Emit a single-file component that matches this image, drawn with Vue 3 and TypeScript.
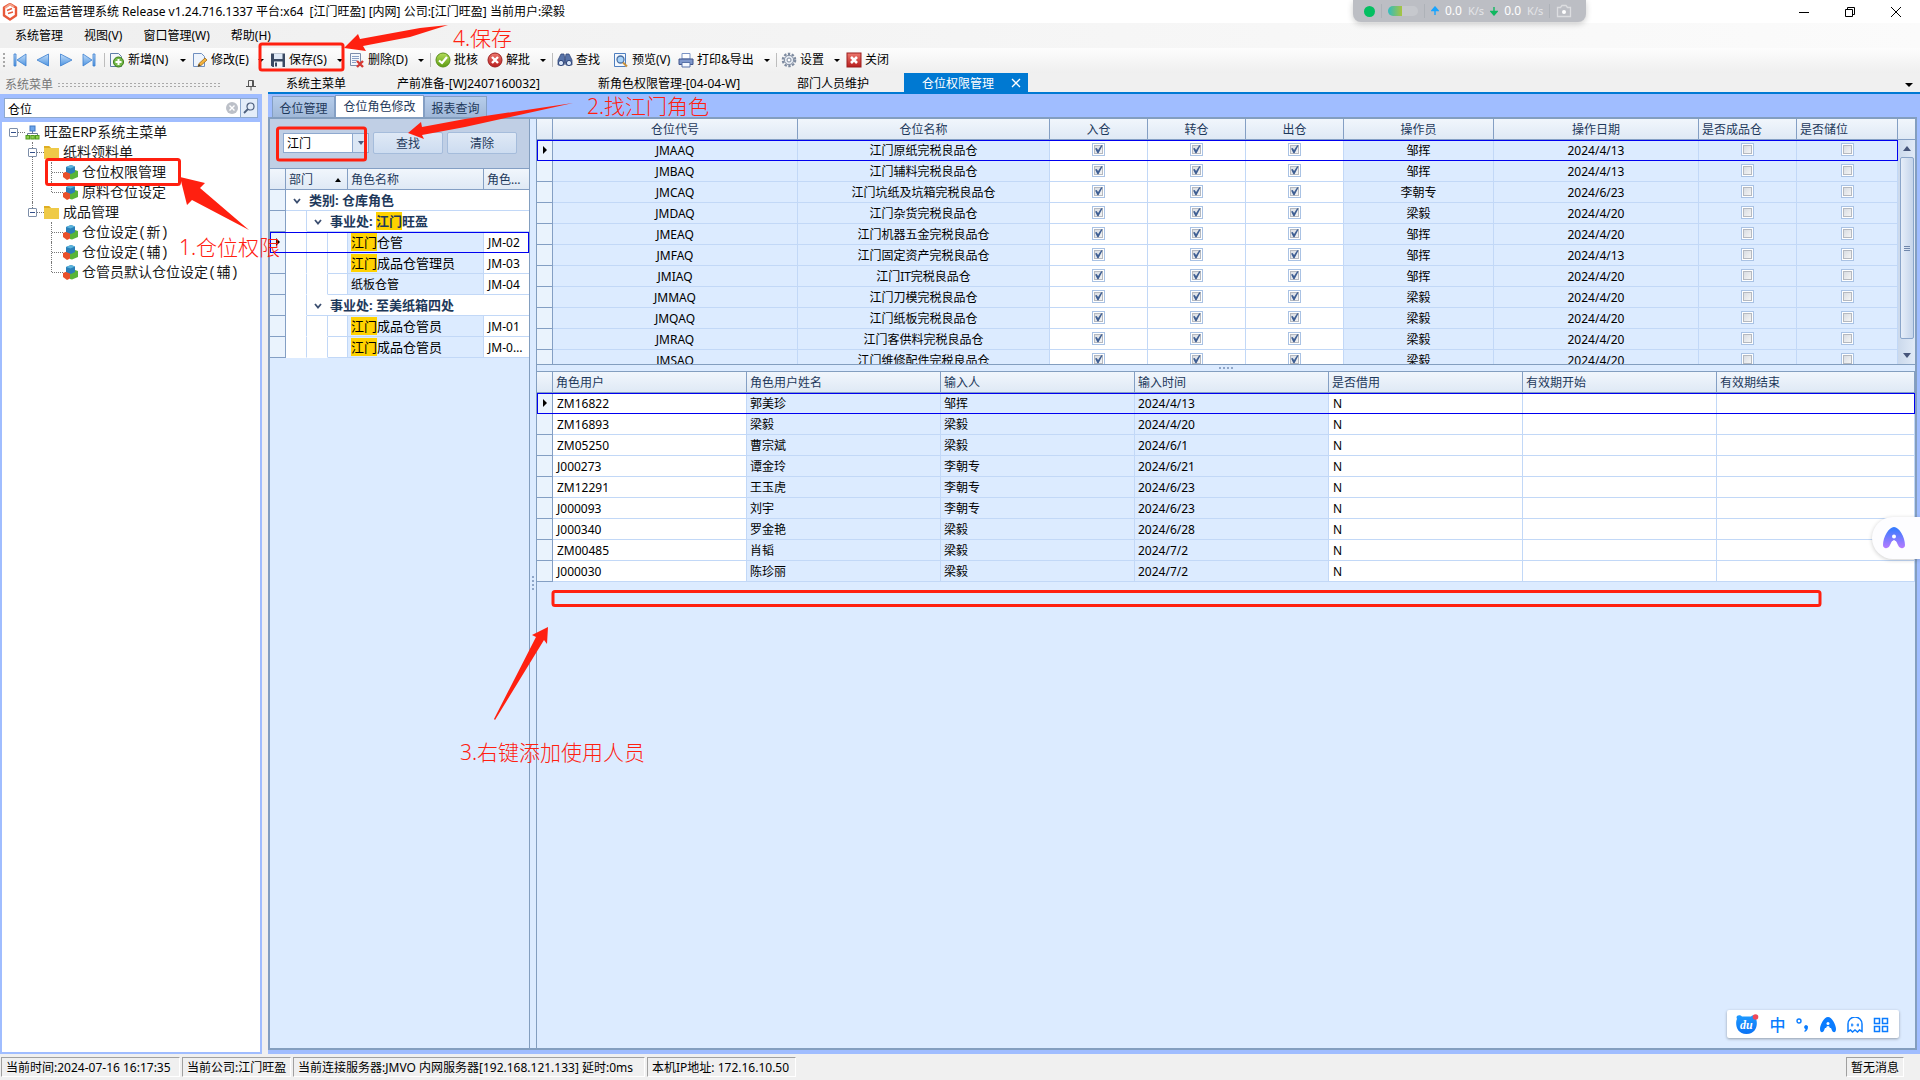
<script setup lang="ts">
import { ref } from 'vue'

interface ToolItem { icon: string; label: string; width: number; drop?: boolean; sep?: boolean }
interface TreeNode { label: string; icon: string; children?: TreeNode[] }

const tools: ToolItem[] = [
  { icon: 'new', label: '新增(N)', width: 71, drop: true },
  { icon: 'edit', label: '修改(E)', width: 66, drop: true },
  { icon: 'save', label: '保存(S)', width: 67, drop: true },
  { icon: 'delete', label: '删除(D)', width: 69, drop: true, sep: true },
  { icon: 'approve', label: '批核', width: 52 },
  { icon: 'reject', label: '解批', width: 53, drop: true, sep: true },
  { icon: 'find', label: '查找', width: 56 },
  { icon: 'preview', label: '预览(V)', width: 65 },
  { icon: 'print', label: '打印&导出', width: 86, drop: true, sep: true },
  { icon: 'gear', label: '设置', width: 53, drop: true },
  { icon: 'close', label: '关闭', width: 44 },
]

const docTabs = ['系统主菜单', '产前准备-[WJ2407160032]', '新角色权限管理-[04-04-W]', '部门人员维护']

const tree: TreeNode[] = [
  {
    label: '旺盈ERP系统主菜单', icon: 'root', children: [
      { label: '纸料领料单', icon: 'folder', children: [
        { label: '仓位权限管理', icon: 'cube' },
        { label: '原料仓位设定', icon: 'cube' },
      ] },
      { label: '成品管理', icon: 'folder', children: [
        { label: '仓位设定(新)', icon: 'cube' },
        { label: '仓位设定(辅)', icon: 'cube' },
        { label: '仓管员默认仓位设定(辅)', icon: 'cube' },
      ] },
    ],
  },
]

const groups = [
  { hit: '江门', name: '旺盈', roles: [
    { hit: '江门', name: '仓管', code: 'JM-02' },
    { hit: '江门', name: '成品仓管理员', code: 'JM-03' },
    { hit: '', name: '纸板仓管', code: 'JM-04' },
  ] },
  { hit: '', name: '至美纸箱四处', roles: [
    { hit: '江门', name: '成品仓管员', code: 'JM-01' },
    { hit: '江门', name: '成品仓管员', code: 'JM-0…' },
  ] },
]

const stores = [
  ['JMAAQ', '江门原纸完税良品仓', '邹挥', '2024/4/13'],
  ['JMBAQ', '江门辅料完税良品仓', '邹挥', '2024/4/13'],
  ['JMCAQ', '江门坑纸及坑箱完税良品仓', '李朝专', '2024/6/23'],
  ['JMDAQ', '江门杂货完税良品仓', '梁毅', '2024/4/20'],
  ['JMEAQ', '江门机器五金完税良品仓', '邹挥', '2024/4/20'],
  ['JMFAQ', '江门固定资产完税良品仓', '邹挥', '2024/4/13'],
  ['JMIAQ', '江门IT完税良品仓', '邹挥', '2024/4/20'],
  ['JMMAQ', '江门刀模完税良品仓', '梁毅', '2024/4/20'],
  ['JMQAQ', '江门纸板完税良品仓', '梁毅', '2024/4/20'],
  ['JMRAQ', '江门客供料完税良品仓', '梁毅', '2024/4/20'],
  ['JMSAQ', '江门维修配件完税良品仓', '梁毅', '2024/4/20'],
]

const users = [
  ['ZM16822', '郭美珍', '邹挥', '2024/4/13'],
  ['ZM16893', '梁毅', '梁毅', '2024/4/20'],
  ['ZM05250', '曹宗斌', '梁毅', '2024/6/1'],
  ['J000273', '谭金玲', '李朝专', '2024/6/21'],
  ['ZM12291', '王玉虎', '李朝专', '2024/6/23'],
  ['J000093', '刘宇', '李朝专', '2024/6/23'],
  ['J000340', '罗金艳', '梁毅', '2024/6/28'],
  ['ZM00485', '肖韬', '梁毅', '2024/7/2'],
  ['J000030', '陈珍丽', '梁毅', '2024/7/2'],
]
const userHeads = ['角色用户', '角色用户姓名', '输入人', '输入时间', '是否借用', '有效期开始', '有效期结束']
const flags = ['入仓', '转仓', '出仓']

const status = [
  '当前时间:2024-07-16 16:17:35',
  '当前公司:江门旺盈',
  '当前连接服务器:JMVO 内网服务器[192.168.121.133] 延时:0ms',
  '本机IP地址: 172.16.10.50',
]

const keyword = ref('仓位')
const role = ref('江门')
</script>

<template>
  <div class="app">
    <svg class="defs" width="0" height="0" aria-hidden="true">
      <defs>
        <linearGradient id="gNav" x1="0" y1="0" x2="0" y2="1"><stop offset="0" stop-color="#c3defa" /><stop offset="1" stop-color="#4e94e0" /></linearGradient>
        <linearGradient id="gRed" x1="0" y1="0" x2="0" y2="1"><stop offset="0" stop-color="#ee7a70" /><stop offset="1" stop-color="#b81d1d" /></linearGradient>
        <linearGradient id="gGreen" x1="0" y1="0" x2="0" y2="1"><stop offset="0" stop-color="#b4dc5a" /><stop offset="1" stop-color="#5c9c12" /></linearGradient>
        <linearGradient id="gA" x1="0" y1="0" x2="0" y2="1"><stop offset="0" stop-color="#2f7bff" /><stop offset="1" stop-color="#b67bff" /></linearGradient>
        <linearGradient id="gDu" x1="0" y1="0" x2="0" y2="1"><stop offset="0" stop-color="#1f9bff" /><stop offset="1" stop-color="#0a72f5" /></linearGradient>
      </defs>
    </svg>

    <header class="title">
      <svg width="16" height="18" viewBox="0 0 16 18">
        <path d="M8 1 14 4.500 14 12.500 8 16.500 2 12.500 2 4.500Z" fill="none" stroke="#e8593a" stroke-width="2.400" stroke-linejoin="round" />
        <path d="M3 5 8 1.500 12 4" fill="none" stroke="#f4a38c" stroke-width="2" />
        <path d="M5 7.500 10 5.500M6 10.500 11 9" stroke="#e8593a" stroke-width="1.500" />
      </svg>
      <span class="name">旺盈运营管理系统 Release v1.24.716.1337 平台:x64&nbsp; [江门旺盈] [内网] 公司:[江门旺盈] 当前用户:梁毅</span>
      <div class="wins">
        <button aria-label="最小化"><svg width="12" height="12"><path d="M1 6.500H11" stroke="#000" /></svg></button>
        <button aria-label="还原"><svg width="12" height="12"><path d="M1.500 3.500H8.500V10.500H1.500ZM3.500 3.500V1.500H10.500V8.500H8.500" fill="none" stroke="#000" /></svg></button>
        <button aria-label="关闭窗口"><svg width="12" height="12"><path d="M1 1 11 11M11 1 1 11" stroke="#000" /></svg></button>
      </div>
    </header>

    <nav class="menu">
      <a href="#">系统管理</a><a href="#">视图(V)</a><a href="#">窗口管理(W)</a><a href="#">帮助(H)</a>
    </nav>

    <div class="toolbar">
      <span class="grip"></span>
      <div class="navs">
        <button aria-label="首条"><svg width="14" height="14"><path d="M1 1H3V13H1ZM13 1V13L4 7Z" fill="url(#gNav)" stroke="#3b7fcf" stroke-width=".8" /></svg></button>
        <button aria-label="上一条"><svg width="14" height="14"><path d="M12.500 1V13L1 7Z" fill="url(#gNav)" stroke="#3b7fcf" stroke-width=".8" /></svg></button>
        <button aria-label="下一条"><svg width="14" height="14"><path d="M1.500 1V13L13 7Z" fill="url(#gNav)" stroke="#3b7fcf" stroke-width=".8" /></svg></button>
        <button aria-label="末条"><svg width="14" height="14"><path d="M13 1H11V13H13ZM1 1V13L10 7Z" fill="url(#gNav)" stroke="#3b7fcf" stroke-width=".8" /></svg></button>
      </div>
      <i class="vsep"></i>
      <template v-for="t in tools" :key="t.icon">
        <button class="tool" :style="{ width: t.width + 'px' }">
          <svg width="16" height="16" viewBox="0 0 16 16">
            <g v-if="t.icon === 'new'">
              <path d="M1.500 1.500H9.500L12.500 4.500V14.500H1.500Z" fill="#f4f7fb" stroke="#5f7ea8" /><circle cx="9.500" cy="10" r="5" fill="#74b84a" stroke="#3a7d14" /><path d="M9.500 7V13M6.500 10H12.500" stroke="#fff" stroke-width="2" />
            </g>
            <g v-else-if="t.icon === 'edit'">
              <path d="M1.500 1.500H9.500L12.500 4.500V14.500H1.500Z" fill="#eef4fc" stroke="#6f8fc0" /><path d="M6 14.500 7 11.500 13 6 15 8 9 13.500Z" fill="#f5b33c" stroke="#9c6a1c" stroke-width=".8" /><path d="M6 14.500 7 12 8.500 13.500Z" fill="#333" />
            </g>
            <g v-else-if="t.icon === 'save'">
              <path d="M1 1.500H15V15H2.500L1 13.500Z" fill="#3b4a63" /><rect x="4" y="1.500" width="8.500" height="5.500" fill="#dfe9f6" /><rect x="4" y="9.500" width="8.500" height="5.500" fill="#f3f6fa" /><rect x="5" y="10.500" width="2" height="4" fill="#3b4a63" />
            </g>
            <g v-else-if="t.icon === 'delete'">
              <path d="M1.500 1.500H11.500V13.500H1.500Z" fill="#f4f7fb" stroke="#7c8cab" /><path d="M3 4.500H10M3 6.500H10M3 8.500H8M3 10.500H7" stroke="#8aa0c6" /><path d="M8 9 14 15M14 9 8 15" stroke="#d63a34" stroke-width="2.400" />
            </g>
            <g v-else-if="t.icon === 'approve'">
              <circle cx="8" cy="8" r="7" fill="url(#gGreen)" stroke="#5b8f1c" /><path d="M4 8.500 7 11 12 5" fill="none" stroke="#fff" stroke-width="2.200" />
            </g>
            <g v-else-if="t.icon === 'reject'">
              <circle cx="8" cy="8" r="7" fill="url(#gRed)" stroke="#9c1f1f" /><path d="M5 5 11 11M11 5 5 11" stroke="#fff" stroke-width="2.400" />
            </g>
            <g v-else-if="t.icon === 'find'">
              <path d="M4 2H7L8 8 7 13H1L1 8ZM12 2H9L8 8 9 13H15V8Z" fill="#5873a8" stroke="#33487a" stroke-width=".8" /><circle cx="4" cy="11" r="2.600" fill="#dbe8fb" stroke="#2c4478" /><circle cx="12" cy="11" r="2.600" fill="#dbe8fb" stroke="#2c4478" />
            </g>
            <g v-else-if="t.icon === 'preview'">
              <path d="M1.500 1.500H12.500V14.500H1.500Z" fill="#f4f8fd" stroke="#4f7fc0" /><circle cx="7.500" cy="7.500" r="3.500" fill="#a9d3f8" stroke="#4a6fa3" stroke-width="1.300" /><path d="M10 10.500 14 14.500" stroke="#c9913c" stroke-width="2" />
            </g>
            <g v-else-if="t.icon === 'print'">
              <path d="M4 1.500H12V7H4Z" fill="#fff" stroke="#7b93c4" /><path d="M1 7H15V12.500H1Z" fill="#7f98cc" stroke="#40558a" /><path d="M4 10.500H12V15H4Z" fill="#f4f8ff" stroke="#5873a8" />
            </g>
            <g v-else-if="t.icon === 'gear'">
              <circle cx="8" cy="8" r="6.200" fill="none" stroke="#7e8ba0" stroke-width="2.200" stroke-dasharray="2.400 1.500" /><circle cx="8" cy="8" r="4.700" fill="#e3e8f0" stroke="#7e8ba0" /><circle cx="8" cy="8" r="2" fill="#fff" stroke="#7e8ba0" />
            </g>
            <g v-else>
              <rect x="1" y="1" width="14" height="14" fill="url(#gRed)" stroke="#9c1f1f" /><path d="M5 5 11 11M11 5 5 11" stroke="#fff" stroke-width="2.600" />
            </g>
          </svg>
          <span>{{ t.label }}</span>
        </button>
        <i v-if="t.drop" class="drop"></i>
        <i v-if="t.sep" class="vsep"></i>
      </template>
    </div>

    <div class="body">
      <aside class="side">
        <div class="side-head"><span>系统菜单</span><i class="dots"></i>
          <svg width="12" height="12"><path d="M3.500 1.500H8.500V7.500M3.500 1.500V7.500M7.500 1.500V7.500M1 7.500H11M6 7.500V11.500" fill="none" stroke="#555" /></svg>
        </div>
        <div class="side-body">
          <div class="search">
            <input v-model="keyword" aria-label="搜索菜单">
            <button class="clear" aria-label="清空"><svg width="12" height="12"><circle cx="6" cy="6" r="6" fill="#bcc0c8" /><path d="M3.500 3.500 8.500 8.500M8.500 3.500 3.500 8.500" stroke="#fff" stroke-width="1.400" /></svg></button>
            <button class="go" aria-label="搜索"><svg width="12" height="12"><circle cx="7.500" cy="4.500" r="3.500" fill="none" stroke="#4d5f7e" stroke-width="1.200" /><path d="M5 7 1 11" stroke="#4d5f7e" stroke-width="1.800" /></svg></button>
          </div>
          <div class="tree">
            <ul>
              <li v-for="a in tree" :key="a.label" class="root">
                <div class="node"><span class="slot"><button aria-label="折叠"></button></span>
                  <svg width="15" height="15"><path d="M7.500 5V9M2.500 11V8.500H12.500V11" fill="none" stroke="#6a7a95" /><rect x="5" y="1" width="5" height="5" fill="#6fa6ea" stroke="#3f78c4" /><rect x="1" y="10.500" width="3.500" height="3.500" fill="#8fd04e" stroke="#4f9a1c" /><rect x="5.800" y="10.500" width="3.500" height="3.500" fill="#8fd04e" stroke="#4f9a1c" /><rect x="10.500" y="10.500" width="3.500" height="3.500" fill="#8fd04e" stroke="#4f9a1c" /></svg>
                  <a href="#">{{ a.label }}</a></div>
                <ul>
                  <li v-for="b in a.children" :key="b.label">
                    <div class="node"><span class="slot"><button aria-label="折叠"></button></span>
                      <svg width="15" height="15"><path d="M0 1H5L7 3H15V14H0Z" fill="#efca48" /><path d="M0 1H5L7 3H0Z" fill="#dfae22" /></svg>
                      <a href="#">{{ b.label }}</a></div>
                    <ul>
                      <li v-for="c in b.children" :key="c.label">
                        <div class="node"><span class="slot"></span>
                          <svg width="15" height="15"><path d="M0 8 5 6 8 8V13L4 15 0 12Z" fill="#e8502a" /><path d="M7 9 12 5 15 6V12L9 14.500 7 14Z" fill="#58b536" /><path d="M3 2 8 0 12 1.500V7L8 9 3 7Z" fill="#2a7fb8" /><path d="M3 2 8 0 12 1.500 7.500 3.500Z" fill="#5cb4dc" /></svg>
                          <a href="#">{{ c.label }}</a></div>
                      </li>
                    </ul>
                  </li>
                </ul>
              </li>
            </ul>
          </div>
        </div>
      </aside>

      <main class="work">
        <div class="doctabs">
          <a v-for="(d, i) in docTabs" :key="d" href="#" :class="'d' + i">{{ d }}</a>
          <div class="on"><a href="#">仓位权限管理</a><button aria-label="关闭标签"><svg width="10" height="10"><path d="M1 1 9 9M9 1 1 9" stroke="#fff" stroke-width="1.300" /></svg></button></div>
          <i class="more"></i>
        </div>
        <div class="stage">
          <div class="tabs"><button>仓位管理</button><button class="on">仓位角色修改</button><button>报表查询</button></div>
          <div class="page">
            <section class="roles">
              <div class="filter">
                <div class="combo"><select v-model="role" aria-label="角色"><option>江门</option></select><i></i></div>
                <button>查找</button><button>清除</button>
              </div>
              <table class="grid rolegrid">
                <colgroup><col style="width:16px"><col style="width:21px"><col style="width:21px"><col style="width:20px"><col><col style="width:45px"></colgroup>
                <thead><tr><th></th><th colspan="3"><span class="sort">部门<i></i></span></th><th>角色名称</th><th>角色…</th></tr></thead>
                <tbody>
                  <tr><td class="ind"></td><td colspan="5" class="grp"><svg class="chev" width="8" height="8"><path d="M1 2 4 5.500 7 2" fill="none" stroke="#3c4f70" stroke-width="1.800" /></svg>类别: 仓库角色</td></tr>
                  <template v-for="(g, gi) in groups" :key="gi">
                    <tr><td class="ind"></td><td class="pad"></td><td colspan="4" class="grp"><svg class="chev" width="8" height="8"><path d="M1 2 4 5.500 7 2" fill="none" stroke="#3c4f70" stroke-width="1.800" /></svg>事业处: <mark v-if="g.hit">{{ g.hit }}</mark>{{ g.name }}</td></tr>
                    <tr v-for="(r, ri) in g.roles" :key="r.code" :class="{ cur: gi === 0 && ri === 0 }">
                      <td class="ind"><i v-if="gi === 0 && ri === 0" class="ptr"></i></td><td class="pad"></td><td class="pad"></td><td class="w"></td>
                      <td class="role" :class="{ hit: r.hit }"><mark v-if="r.hit">{{ r.hit }}</mark>{{ r.name }}</td><td class="w code">{{ r.code }}</td>
                    </tr>
                  </template>
                </tbody>
              </table>
            </section>
            <div class="vsplit"><i></i><i></i><i></i><i></i></div>
            <section class="detail">
              <div class="upper">
                <div class="clip">
                  <table class="grid center">
                    <colgroup><col style="width:16px"><col style="width:245px"><col><col style="width:98px"><col style="width:98px"><col style="width:98px"><col style="width:150px"><col style="width:205px"><col style="width:98px"><col style="width:101px"></colgroup>
                    <thead><tr><th></th><th>仓位代号</th><th>仓位名称</th><th v-for="f in flags" :key="f">{{ f }}</th><th>操作员</th><th>操作日期</th><th class="l">是否成品仓</th><th class="l">是否储位</th></tr></thead>
                    <tbody>
                      <tr v-for="(s, i) in stores" :key="s[0]" :class="{ cur: i === 0 }">
                        <td class="ind"><i v-if="i === 0" class="ptr"></i></td><td>{{ s[0] }}</td><td>{{ s[1] }}</td>
                        <td v-for="f in flags" :key="f" class="w"><input type="checkbox" checked :aria-label="s[0] + f"></td>
                        <td>{{ s[2] }}</td><td>{{ s[3] }}</td>
                        <td><input type="checkbox" disabled :aria-label="s[0] + '是否成品仓'"></td><td><input type="checkbox" disabled :aria-label="s[0] + '是否储位'"></td>
                      </tr>
                    </tbody>
                  </table>
                </div>
                <div class="scroll"><div class="cap"></div><i class="up"></i><div class="thumb"><b></b><b></b><b></b></div><i class="down"></i></div>
              </div>
              <div class="hsplit"><i></i><i></i><i></i><i></i></div>
              <div class="lower">
                <table class="grid">
                  <colgroup><col style="width:16px"><col v-for="n in 6" :key="n" style="width:194px"><col></colgroup>
                  <thead><tr><th></th><th v-for="h in userHeads" :key="h">{{ h }}</th></tr></thead>
                  <tbody>
                    <tr v-for="(u, i) in users" :key="u[0]" :class="{ cur: i === 0 }">
                      <td class="ind"><i v-if="i === 0" class="ptr"></i></td><td class="w">{{ u[0] }}</td><td>{{ u[1] }}</td><td>{{ u[2] }}</td><td>{{ u[3] }}</td><td class="w">N</td><td class="w"></td><td class="w"></td>
                    </tr>
                  </tbody>
                </table>
              </div>
            </section>
          </div>
        </div>
      </main>
    </div>

    <footer class="status">
      <span v-for="(s, i) in status" :key="s" :class="'s' + i">{{ s }}</span><span class="msg">暂无消息</span>
    </footer>

    <div class="meter">
      <i class="dot"></i><i class="bar"></i><i class="pill"></i><i class="bar"></i>
      <svg width="8" height="10"><path d="M4 9V2M1 4.500 4 1 7 4.500Z" fill="#18a4ff" stroke="#18a4ff" stroke-width="1.400" /></svg><b>0.0</b><span>K/s</span>
      <svg width="8" height="10"><path d="M4 1V8M1 5.500 4 9 7 5.500Z" fill="#10b860" stroke="#10b860" stroke-width="1.400" /></svg><b>0.0</b><span>K/s</span><i class="bar"></i>
      <svg width="16" height="14"><path d="M1.500 3.500H4.500L6 1.500H10L11.500 3.500H14.500V12.500H1.500Z" fill="none" stroke="#dcdde0" stroke-width="1.300" /><circle cx="8" cy="8" r="2" fill="#fff" /></svg>
    </div>

    <button class="assist" aria-label="助手"><svg width="24" height="24" viewBox="0 0 24 24"><path fill-rule="evenodd" d="M12 1C17 1 23 11 23 19C23 23 18 23 16.500 20L14.500 16C13.500 14 10.500 14 9.500 16L7.500 20C6 23 1 23 1 19C1 11 7 1 12 1Z" fill="url(#gA)" /><circle cx="12" cy="10.500" r="2" fill="#fff" /><path d="M12 14.500C14 14.500 15 17 15 22H9C9 17 10 14.500 12 14.500Z" fill="#fff" /></svg></button>

    <div class="ime">
      <button aria-label="输入法" class="du"><svg width="24" height="22"><path d="M2 5C0 1 5 0 7 2.500H16C18 0 23 1 21 5C23 9 22 20 11.500 20C1 20 0 9 2 5Z" fill="url(#gDu)" /><circle cx="20.500" cy="3" r="2.800" fill="#f04a5a" /></svg><em>du</em></button>
      <button class="zh">中</button>
      <button aria-label="标点"><svg width="14" height="16"><circle cx="3" cy="4" r="2" fill="none" stroke="#0a7cff" stroke-width="1.400" /><path d="M12 9.500C12 12.500 11 14 8.500 15L8.500 13.500Q9.500 13 9.500 12A2 2 0 1 1 12 9.500Z" fill="#0a7cff" /></svg></button>
      <button aria-label="AI"><svg width="16" height="16"><path d="M8 0C12 0 16 8 16 12C16 16 13 16 12 13.500L11 11H5L4 13.500C3 16 0 16 0 12C0 8 4 0 8 0Z" fill="#0a7cff" /><circle cx="8" cy="6.500" r="1.500" fill="#fff" /><path d="M8 9C10 9 10 12 10.500 15H5.500C6 12 6 9 8 9Z" fill="#fff" /></svg></button>
      <button aria-label="皮肤"><svg width="16" height="16"><path d="M1 14.500V7A7 7 0 0 1 15 7V14.500L12.500 13 10.500 15 8 13 5.500 15 3.500 13Z" fill="none" stroke="#0a7cff" stroke-width="1.500" /><path d="M5 6.500V9.500M6.500 8H4M11 6.500V9.500M12 8H9.500" stroke="#0a7cff" stroke-width="1.200" /></svg></button>
      <button aria-label="工具箱"><svg width="16" height="16"><path d="M1.500 1.500H6.500V6.500H1.500ZM9.500 1.500H14.500V6.500H9.500ZM1.500 9.500H6.500V14.500H1.500ZM9.500 9.500H14.500V14.500H9.500Z" fill="none" stroke="#0a7cff" stroke-width="1.500" /></svg></button>
    </div>

    <svg class="marks" width="1830" height="780" aria-hidden="true">
      <g fill="none" stroke="#ff2010" stroke-width="3">
        <rect x="260" y="44" width="83" height="26" rx="2" />
        <rect x="46.500" y="159.500" width="133" height="25" rx="2" />
        <rect x="277.500" y="128" width="88" height="32" rx="2" />
        <rect x="553" y="591.500" width="1267" height="14" rx="2" />
      </g>
      <g fill="#ff2010">
        <path d="M448 25 410 37 363 46 366 51 344 48 358 34 360 39 420 28Z" />
        <path d="M573 103 465 127 422 135 424 139 408 133 421 122 422 127 465 119Z" />
        <path d="M249 230 192 200 187 205 180 177 205 183 200 188Z" />
        <path d="M494 719 536 637 532 635 548 627 547 644 544 640 495 720Z" />
      </g>
      <g class="notes">
        <text x="179" y="255">1.仓位权限</text>
        <text x="587" y="114">2.找江门角色</text>
        <text x="460" y="760">3.右键添加使用人员</text>
        <text x="453" y="46">4.保存</text>
      </g>
    </svg>
  </div>
</template>

<style>
html, body { margin: 0; }
</style>

<style scoped>
* { box-sizing: border-box; }
.app { position: relative; min-height: 100vh; display: flex; flex-direction: column; overflow: hidden; background: #f0f0f0; font: 12px/16px "Noto Sans", "Noto Sans CJK SC", sans-serif; color: #000; }
.defs { position: absolute; }
a { color: inherit; text-decoration: none; }
button { font: inherit; color: inherit; background: none; border: 0; padding: 0; }
svg { display: block; flex: none; }
i { font-style: normal; }
.title { height: 23px; background: #fff; display: flex; align-items: center; padding: 0 18px 0 2px; gap: 5px; }
.title .name { white-space: pre; }
.wins { margin-left: auto; display: flex; gap: 34px; }
.menu { height: 25px; display: flex; align-items: center; padding-left: 15px; gap: 21px; background: linear-gradient(90deg, #efefef, #fbfbfb); }
.toolbar { height: 25px; display: flex; align-items: center; padding: 0 0 2px 3px; background: linear-gradient(#fdfdfd, #efefef); white-space: nowrap; }
.grip { width: 2px; height: 14px; background: repeating-linear-gradient(#a8a8a8 0 2px, transparent 2px 4px); }
.navs { display: flex; gap: 9px; margin: 0 8px 0 8px; }
.vsep { width: 1px; height: 14px; background: #bdbdbd; margin: 0 4px 0 0; }
.tool { display: flex; align-items: center; gap: 3px; flex: none; }
.drop { width: 0; height: 0; border: 3px solid transparent; border-top-color: #000; border-bottom: 0; margin: 2px 6px 0 0; }
.body { flex: 1; display: flex; min-height: 0; }
.side { width: 262px; margin-right: 6px; display: flex; flex-direction: column; }
.side-head { height: 21px; display: flex; align-items: center; padding: 2px 5px 0; gap: 4px; color: #777; }
.dots { flex: 1; height: 5px; margin-right: 20px; background: radial-gradient(circle, #aaa 1px, transparent 1px) 0 0 / 4px 3px; }
.side-body { flex: 1; display: flex; flex-direction: column; background: #a0bdff; padding: 4px 2px 2px; }
.search { display: flex; align-items: center; height: 20px; margin: 0 2px 4px; background: #fff; border: 1px solid #8ea9cf; }
.search input { flex: 1; min-width: 0; height: 18px; border: 0; outline: 0; background: none; padding: 2px 3px 0; font: inherit; }
.clear { margin-right: 2px; }
.go { width: 17px; height: 18px; padding-left: 2px; border-left: 1px solid #8ea9cf; background: #e4edf9; }
.tree { flex: 1; background: #fff; padding-left: 2px; font: 14px/20px "Liberation Mono", "Noto Sans CJK SC", monospace; color: #1a1a1a; }
.tree ul { list-style: none; margin: 0; padding: 0; }
.tree ul ul { padding-left: 19px; }
.tree li { position: relative; }
.tree li::before { content: ""; position: absolute; left: 9px; top: 0; bottom: 0; border-left: 1px dotted #777; }
.tree li:last-child::before { bottom: auto; height: 10px; }
.tree li.root::before { display: none; }
.node { display: flex; align-items: center; height: 20px; }
.node svg { margin: 0 4px 0 2px; }
.slot { position: relative; width: 19px; height: 20px; flex: none; }
.slot::before { content: ""; position: absolute; left: 10px; right: -2px; top: 10px; border-top: 1px dotted #777; }
.slot button { position: absolute; left: 5px; top: 6px; width: 9px; height: 9px; border: 1px solid #7d8ea8; border-radius: 1px; background: linear-gradient(#33508a, #33508a) 50% 50% / 5px 1px no-repeat #fff; }
.node a { white-space: nowrap; padding-top: 2px; }
.work { flex: 1; min-width: 0; display: flex; flex-direction: column; }
.doctabs { height: 21px; display: flex; align-items: center; border-bottom: 2px solid #0079d2; padding-left: 18px; white-space: nowrap; }
.doctabs a { padding-top: 2px; }
.d0 { width: 111px; }
.d1 { width: 201px; }
.d2 { width: 199px; }
.d3 { width: 107px; }
.doctabs .on { width: 124px; height: 19px; display: flex; align-items: center; justify-content: space-between; padding: 0 7px 0 18px; background: #0079d2; color: #fff; }
.more { margin: 4px 7px 0 auto; border: 4px solid transparent; border-top-color: #000; border-bottom: 0; }
.stage { flex: 1; min-height: 0; display: flex; flex-direction: column; background: #a0bdff; padding: 1px 3px 4px 0; }
.tabs { display: flex; align-items: flex-end; height: 22px; padding-left: 4px; color: #1e395b; }
.tabs button { height: 21px; width: 63px; background: linear-gradient(#b6cdeb, #a0b8d8); border: 1px solid #849fc4; border-bottom: 0; padding-top: 3px; }
.tabs .on { height: 22px; width: 89px; background: #fff; padding-top: 1px; }
.page { flex: 1; min-height: 0; display: flex; background: #dcebff; border: 2px solid #839ebf; }
.roles { width: 260px; border-right: 1px solid #839ebf; }
.filter { display: flex; align-items: flex-start; height: 49px; background: #c0cfe5; padding: 13px 0 0 13px; color: #1e395b; }
.combo { position: relative; width: 86px; margin: 1px 4px 0 0; }
.combo select { appearance: none; display: block; width: 100%; height: 20px; border: 1px solid #8ea9cf; border-radius: 0; background: linear-gradient(90deg, #fff 68px, #8ea9cf 68px 69px, #dce7f5 69px); font: inherit; color: #000; padding: 2px 3px 0; }
.combo i { position: absolute; right: 5px; top: 8px; border: 3px solid transparent; border-top: 4px solid #4a5d80; border-bottom: 0; }
.filter button { width: 70px; height: 22px; margin-right: 4px; padding-top: 2px; border: 1px solid #a5bcdb; border-radius: 2px; background: linear-gradient(#dfe9f6, #cddcf0); }
.grid { width: 100%; table-layout: fixed; border-collapse: separate; border-spacing: 0; }
.grid th { height: 21px; padding: 2px 3px 0; text-align: left; font-weight: 400; color: #1e395b; background: linear-gradient(#f1f6fc, #dfe9f5); border-right: 1px solid #849fc4; border-bottom: 1px solid #849fc4; white-space: nowrap; overflow: hidden; }
.grid td { height: 21px; padding: 2px 3px 0; border-right: 1px solid #c2d8f7; border-bottom: 1px solid #c2d8f7; white-space: nowrap; overflow: hidden; }
.grid td.w { background: #fff; padding-left: 4px; padding-right: 4px; }
.grid td.ind { background: #eaf3fd; border-color: #849fc4; padding: 0; }
.grid tr.cur { outline: 1px solid #0000f0; outline-offset: -1px; }
.ptr { display: block; width: 0; margin-left: 6px; border: 4px solid transparent; border-left-color: #000; border-right: 0; }
.center th, .center td { text-align: center; }
.center th.l { text-align: left; }
.rolegrid { border-top: 1px solid #849fc4; }
.rolegrid th:last-child, .rolegrid td:last-child { border-right: 0; }
.grid td.grp { background: #fff; font-weight: 700; font-size: 13px; color: #1e395b; padding-top: 0; }
.rolegrid td.pad { background: #fff; border-bottom-color: #fff; }
.grid td.hit { font-size: 13px; padding-top: 0; }
.chev { display: inline-block; margin: 0 8px 1px 4px; vertical-align: middle; }
.sort { display: flex; justify-content: space-between; align-items: center; }
.sort i { border: 3px solid transparent; border-bottom: 4px solid #000; border-top: 0; margin-right: 3px; }
mark { background: #ffd200; color: inherit; }
.vsplit { width: 6px; display: flex; flex-direction: column; justify-content: flex-start; align-items: center; gap: 2px; padding-top: 457px; }
.vsplit i, .hsplit i { width: 2px; height: 2px; background: #8fa6c8; flex: none; }
.detail { flex: 1; min-width: 0; display: flex; flex-direction: column; border-left: 1px solid #839ebf; }
.upper { height: 246px; display: flex; border-bottom: 1px solid #839ebf; }
.clip { flex: 1; min-width: 0; overflow: hidden; }
.scroll { width: 17px; display: flex; flex-direction: column; align-items: center; background: linear-gradient(90deg, #cbd9ec, #e0eaf7); }
.cap { width: 17px; height: 21px; background: linear-gradient(#f1f6fc, #dfe9f5); border-bottom: 1px solid #849fc4; }
.up { border: 4px solid transparent; border-bottom: 5px solid #46557a; border-top: 0; margin: 6px 0; }
.down { border: 4px solid transparent; border-top: 5px solid #46557a; border-bottom: 0; margin: 14px 0 6px; }
.thumb { flex: 1; width: 14px; display: flex; flex-direction: column; justify-content: center; align-items: center; gap: 1px; border: 1px solid #8aa5c9; border-radius: 2px; background: linear-gradient(90deg, #e6eef9, #c4d4ea); }
.thumb b { width: 6px; height: 1px; background: #7087ab; }
.hsplit { height: 6px; display: flex; justify-content: center; align-items: center; gap: 2px; }
.lower { flex: 1; border-top: 1px solid #839ebf; }
input[type="checkbox"] { appearance: none; display: block; width: 13px; height: 13px; margin: 0 auto 4px; border: 1px solid #a9c2e4; background: #fff; position: relative; }
input[type="checkbox"]::before { content: ""; position: absolute; inset: 1px; border: 1px solid #b5b9c0; background: linear-gradient(135deg, #d9dde3, #f4f4f4); }
input[type="checkbox"]:checked::after { content: ""; position: absolute; inset: 1px; background: #3f5f93; clip-path: polygon(12% 45%, 30% 40%, 45% 62%, 80% 8%, 95% 12%, 50% 96%, 38% 96%); }
.status { height: 26px; display: flex; align-items: flex-start; gap: 2px; padding: 3px 16px 0 1px; background: #f0f0f0; white-space: nowrap; }
.status span { height: 20px; padding: 2px 4px 0; border: 1px solid; border-color: #a0a0a0 #fff #fff #a0a0a0; }
.s0 { width: 179px; }
.s1 { width: 109px; }
.s2 { width: 352px; }
.s3 { width: 149px; }
.status .msg { margin-left: auto; }
.meter { position: absolute; top: 0; right: 334px; width: 233px; height: 22px; display: flex; align-items: center; gap: 6px; padding: 0 11px; background: #bcbec4; border-radius: 0 0 8px 8px; box-shadow: 0 2px 6px #0003; color: #e4e5e8; font-size: 11px; }
.meter b { font-weight: 400; font-size: 12px; color: #fff; }
.meter .dot { width: 11px; height: 11px; border-radius: 50%; background: #04bf61; flex: none; }
.meter .bar { width: 1px; height: 14px; background: #aeb2b8; flex: none; }
.meter .pill { width: 30px; height: 10px; flex: none; border-radius: 5px; background: linear-gradient(90deg, #30bcc0, #a8c440 14px, #c6c8cd 14px); }
.assist { position: absolute; top: 517px; right: 0; width: 48px; height: 42px; padding-left: 10px; background: #fdfdff; border-radius: 21px 0 0 21px; box-shadow: 0 1px 4px #0003; }
.ime { position: absolute; right: 21px; bottom: 42px; width: 172px; height: 28px; display: flex; align-items: center; justify-content: space-between; padding: 2px 10px 0 8px; background: #fff; border-radius: 2px; box-shadow: 0 1px 3px #0005; }
.du { position: relative; }
.du em { position: absolute; left: 5px; top: 3px; color: #fff; font: italic 700 12px/16px "Liberation Serif", serif; }
.zh { color: #0a7cff; font-size: 16px; font-weight: 500; }
.marks { position: absolute; left: 0; top: 0; pointer-events: none; }
.notes { font: 300 21px "Noto Sans", "Noto Sans CJK SC", sans-serif; fill: #ff2010; }
</style>
